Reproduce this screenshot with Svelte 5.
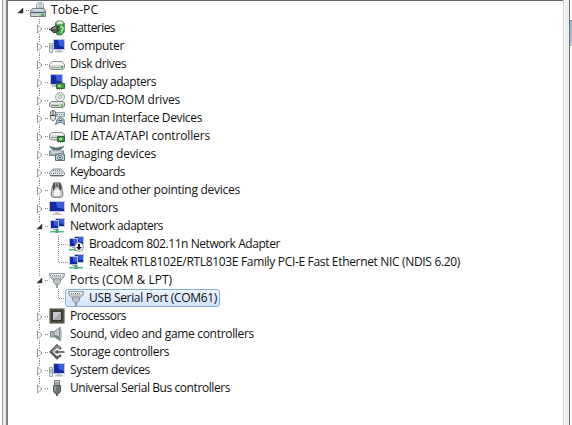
<script>
  const rows = [
    { level: 0, icon: 'pc', text: 'Tobe-PC', open: true, w: 47 },
    { level: 1, icon: 'battery', text: 'Batteries', w: 45 },
    { level: 1, icon: 'computer', text: 'Computer', w: 54 },
    { level: 1, icon: 'disk', text: 'Disk drives', w: 56 },
    { level: 1, icon: 'display', text: 'Display adapters', w: 86 },
    { level: 1, icon: 'dvd', text: 'DVD/CD-ROM drives', w: 110 },
    { level: 1, icon: 'hid', text: 'Human Interface Devices', w: 132 },
    { level: 1, icon: 'ide', text: 'IDE ATA/ATAPI controllers', w: 140 },
    { level: 1, icon: 'imaging', text: 'Imaging devices', w: 86 },
    { level: 1, icon: 'keyboard', text: 'Keyboards', w: 55 },
    { level: 1, icon: 'mouse', text: 'Mice and other pointing devices', w: 170 },
    { level: 1, icon: 'monitor', text: 'Monitors', w: 48 },
    { level: 1, icon: 'network', text: 'Network adapters', w: 93, open: true },
    { level: 2, icon: 'netdown', text: 'Broadcom 802.11n Network Adapter', w: 191 },
    { level: 2, icon: 'network', text: 'Realtek RTL8102E/RTL8103E Family PCI-E Fast Ethernet NIC (NDIS 6.20)', w: 371, end: true },
    { level: 1, icon: 'port', text: 'Ports (COM & LPT)', w: 102, open: true },
    { level: 2, icon: 'port', text: 'USB Serial Port (COM61)', w: 128, end: true, selected: true },
    { level: 1, icon: 'cpu', text: 'Processors', w: 56 },
    { level: 1, icon: 'sound', text: 'Sound, video and game controllers', w: 184 },
    { level: 1, icon: 'storage', text: 'Storage controllers', w: 99 },
    { level: 1, icon: 'computer', text: 'System devices', w: 80 },
    { level: 1, icon: 'usb', text: 'Universal Serial Bus controllers', w: 160, end: true }
  ];

  // Spread the letters so that a label takes its nominal width.
  function fit(node, width) {
    const natural = node.getBoundingClientRect().width;
    node.style.letterSpacing = `${(width - natural) / node.textContent.length}px`;
  }
</script>

{#snippet screen(x, y, w, h)}
  <rect {x} {y} width={w} height={h} fill="#bcc8da" />
  <rect x={x + 1} y={y + 1} width={w - 2} height={h - 2} fill="#142a9e" />
  <path d="M{x + w / 2 - 1} {y + 1}H{x + w - 1}V{y + h - 3}L{x + w / 2} {y + h / 2 + 1}Z" fill="#3c5ce0" />
{/snippet}

{#snippet glyph(name)}
  <svg class="icon" viewBox="0 0 16 16" width="16" height="16">
    {#if name === 'pc'}
      <path d="M6.5 7V2.5L8 .7H12L13.5 2.5V7" fill="#e1e7e9" stroke="#89959a" />
      <path d="M8.5 3H12M8.5 5H12" stroke="#91a6b0" />
      <path d="M2.5 6.5H14L15.5 9V14.5H.5V9Z" fill="#b5c2c8" stroke="#758388" />
      <path d="M1 10.5H15" stroke="#58666c" />
      <path d="M3 8H13" stroke="#e9eff1" />
      <path d="M2 13H9" stroke="#e2e8ea" />
      <rect x="11" y="12" width="3" height="2" fill="#4fae4d" />
    {:else if name === 'battery'}
      <path d="M6.5 3L8 1.2H13L15.2 3V12L12.5 14.8H8Z" fill="#3ba04a" stroke="#2d7b3c" />
      <ellipse cx="10.8" cy="2.8" rx="3.6" ry="1.8" fill="#e3eddf" stroke="#6f9a70" stroke-width=".6" />
      <path d="M11 7Q13.5 6 14 8.5L12 13" fill="none" stroke="#a2e38f" stroke-width="1.8" />
      <path d="M0 9.5H3M7 7L11 6.5M7 11L10.5 10" stroke="#42453c" stroke-width="1.4" />
      <path d="M2.5 8L7 5.8L9 8L8 12L5 12.8L2.5 11Z" fill="#565b50" stroke="#30352d" />
      <path d="M4 8.6L7 7.6" stroke="#c6c8af" />
    {:else if name === 'computer'}
      {@render screen(4, 1, 12, 11)}
      <path d="M8 12H12V13H14V14.5H6V13H8Z" fill="#b6bfca" />
      <path d="M.5 5.5H3.5V14.5H.5Z" fill="#e2e6e8" stroke="#98a2a8" />
      <path d="M1 8H3M1 10H3" stroke="#89949b" />
    {:else if name === 'disk'}
      <path d="M3 5.5H13L15.5 8.5V11.5L14 13.5H2L.5 11.5V8.5Z" fill="#d2d6d4" stroke="#858c88" />
      <path d="M3.2 6H12.8L15 9H1Z" fill="#f7f8f7" />
      <path d="M2 11.5H11" stroke="#a1a8a4" />
      <rect x="12" y="10" width="2" height="2" fill="#42b63f" />
    {:else if name === 'display'}
      {@render screen(1, 0, 13, 11)}
      <path d="M3 11H8V13H3Z" fill="#b2bac5" />
      <path d="M7.5 9.5H15.5V14.5H7.5Z" fill="#469449" stroke="#286e37" />
      <path d="M9 11H12V13H9Z" fill="#a8d69c" />
      <path d="M8 15.5H14" stroke="#b4a64d" stroke-dasharray="1 1" />
    {:else if name === 'dvd'}
      <circle cx="11" cy="5" r="4.5" fill="#e6ebe4" stroke="#a0a8a1" />
      <path d="M11 5L9 1M11 5L14 2" stroke="#add1a4" stroke-width="1.4" />
      <circle cx="11" cy="5" r="1.4" fill="#fff" stroke="#999" stroke-width=".7" />
      <path d="M3 9.5H14L15.5 11V14L14 15.5H2L.5 14V11Z" fill="#cfd4d0" stroke="#7d8580" />
      <path d="M2 11H13" stroke="#f6f7f6" />
      <path d="M2 13.5H10" stroke="#78807b" />
      <rect x="12" y="12.5" width="2" height="2" fill="#42aa3f" />
    {:else if name === 'hid'}
      <path d="M1.5 2L3 .5H5L6.5 2V9L5 10.5H3L1.5 9Z" fill="#dcdfe0" stroke="#6d7579" />
      <path d="M4 1V5M2 5.5H6" stroke="#42494c" />
      <path d="M7.5 2.5H15.5V6.5H7.5Z" fill="#dfe5e9" stroke="#94a1aa" />
      <path d="M8 4.5H15" stroke="#76858f" stroke-dasharray="1 1" />
      <path d="M6.5 14.5L8 9.5L10 7.8H13L15 9.5L15.5 15L13 12.5H10Z" fill="#b0c0cb" stroke="#657785" />
      <path d="M9.5 10.5H13" stroke="#42586a" />
    {:else if name === 'ide'}
      <path d="M3 4.5H13L15.5 6.5V10.5L14 12H2L.5 10.5V6.5Z" fill="#d8dcda" stroke="#858b88" />
      <path d="M3 5H13L14.5 7H1.5Z" fill="#f8f8f8" />
      <path d="M2 9.5H8" stroke="#969f9a" />
      <path d="M8.5 8.5H15.5V13.5H8.5Z" fill="#429245" stroke="#246a35" />
      <path d="M10 10H13V12H10Z" fill="#aadd9b" />
      <path d="M9 14.5H15" stroke="#b4a64d" stroke-dasharray="1 1" />
    {:else if name === 'imaging'}
      <path d="M.5 .5L7 2L15 .5L11 4H4Z" fill="#5c7679" stroke="#455b60" stroke-width=".6" />
      <path d="M.5 5H14.5V8.5L12 9.5H.5Z" fill="#abbbbd" stroke="#71868a" />
      <path d="M2 6H12" stroke="#eef4f4" />
      <path d="M6.5 8.5H9L10 7.5H13L14 8.5H15.5V14.5H6.5Z" fill="#bccad3" stroke="#5d717e" />
      <circle cx="11" cy="11.5" r="2.3" fill="#edf4f8" stroke="#5a7486" />
      <circle cx="11" cy="11.5" r=".9" fill="#263d4e" />
    {:else if name === 'keyboard'}
      <path d="M4 5H12L15.5 9V10.5L14 12H2L.5 10.5V9Z" fill="#e1e3e5" stroke="#85898d" />
      <path d="M4 6.5H12M2 9.5H14" stroke="#81888d" stroke-dasharray="1 1" />
      <path d="M3 8H13" stroke="#9ca2a6" stroke-dasharray="1 1" stroke-dashoffset="1" />
      <path d="M1.5 11.5H14.5" stroke="#64696d" />
    {:else if name === 'mouse'}
      <path d="M5 .8H11L12.5 4L14 12Q14 15.4 11 15.4H5Q2 15.4 2 12L3.5 4Z" fill="#c6c8c8" stroke="#767a7a" />
      <path d="M4.5 1L6 1L6.5 5L4.5 9L3.6 6ZM11.5 1L10 1L9.5 5L11.5 9L12.4 6Z" fill="#454949" />
      <path d="M8 7Q11 8 11.5 13Q8 15 4.5 13Q5 8 8 7Z" fill="#f6f6f6" />
      <path d="M8 1.5V5" stroke="#424646" stroke-width="1.4" />
    {:else if name === 'monitor'}
      {@render screen(0, 1, 16, 11)}
      <path d="M6 12H10V13.5H13V15H3V13.5H6Z" fill="#cfc0cb" />
    {:else if name === 'network' || name === 'netdown'}
      {@render screen(6, 0, 10, 9)}
      {@render screen(1, 2, 9, 9)}
      <path d="M4 11H8V12H4Z" fill="#a2afbb" />
      <path d="M1 13.7H15" stroke="#58bd84" stroke-width="1.6" />
      <path d="M8 11V15" stroke="#46a874" stroke-width="3" />
      {#if name === 'netdown'}
        <circle cx="11" cy="11" r="4.3" fill="#fafafa" stroke="#9a9a9a" />
        <path d="M10 8H12V11H14L11 14L8 11H10Z" fill="#191919" />
      {/if}
    {:else if name === 'port'}
      <path d="M.5 1.5H15.5L15 5L12.5 7.5H3.5L1 5Z" fill="#c5cbce" stroke="#8f989d" />
      <path d="M2 2H14V4H2Z" fill="#eff1f2" />
      <path d="M3 3.5H13" stroke="#717b80" stroke-dasharray="1 1" />
      <path d="M4.5 7H11.5V10L10 12H6L4.5 10Z" fill="#d4d8da" stroke="#899297" />
      <path d="M6 7V10M8 7V11M10 7V10" stroke="#a0a9ad" />
      <path d="M6.5 12H9.5V13.5H9V16H7V13.5H6.5Z" fill="#929ca1" />
    {:else if name === 'cpu'}
      <rect x=".5" y=".5" width="15" height="15" fill="#44443f" />
      <rect x="1" y="1" width="14" height="14" fill="none" stroke="#8e8c77" stroke-dasharray="1 1" />
      <rect x="3.5" y="3.5" width="9" height="9" fill="#a3a5a6" stroke="#383838" />
      <path d="M4 4H12L4 12Z" fill="#c6c8c9" />
    {:else if name === 'sound'}
      <path d="M1.5 5.5H5V11H1.5Z" fill="#a5b0b5" stroke="#818c91" />
      <path d="M5 5.3L11.5 .5V15.5L5 11Z" fill="#7c888e" />
      <path d="M5.5 6L10 2.5V10L5.5 9Z" fill="#c1cace" />
      <path d="M11.5 1Q13.3 8 11.5 15" fill="#dbe1e3" stroke="#9ba6ac" />
    {:else if name === 'storage'}
      <path d="M12 5L8 1.8L2 8L8 14L12 11" fill="none" stroke="#5d5f5d" stroke-width="2.8" />
      <path d="M11 4.5L8 2.3L3 7.5" fill="none" stroke="#adb0ad" />
      <path d="M6 8H15.5" stroke="#666966" stroke-width="1.8" />
      <path d="M5.5 8L9 5.8V10.2Z" fill="#555755" />
    {:else if name === 'usb'}
      <path d="M5.5 .5H10.5V5H5.5Z" fill="#d9dcde" stroke="#74797c" />
      <path d="M7 2V4M9 2V4" stroke="#606568" />
      <path d="M4.5 5.5H11.5V11L10 13.5H6L4.5 11Z" fill="#707578" stroke="#505558" />
      <path d="M6 6V11" stroke="#b5babd" />
      <path d="M8 13V16" stroke="#5d6265" stroke-width="2" />
    {/if}
  </svg>
{/snippet}

<div class="window">
  <div class="edge left"></div>
  <div class="tree">
    {#each rows as row}
      <div class="row">
        {#if row.level > 0}<span class="cell"></span>{/if}
        {#if row.level === 2}
          <svg class="cell" width="19" height="18"><path class="dots" d="M9.5 0V18" /></svg>
        {/if}
        <svg class="cell" width="19" height="18">
          {#if row.level === 2}
            <path class="dots" d="M9.5 0V{row.end ? 9 : 18}" />
          {:else if row.level === 1}
            <path class="dots" d="M9.5 0V5{row.end ? '' : 'M9.5 15V18'}" />
          {/if}
          <path class="dots" d="M{row.level === 2 ? 10 : 15} 9.5H19" />
          {#if row.open}
            <path d="M12 7V12H7Z" fill="#333" stroke="#333" stroke-width=".5" />
          {:else if row.level === 1}
            <path d="M7.5 6L12 10L7.5 14Z" fill="#fff" stroke="#999" />
          {/if}
        </svg>
        <span class="item" class:selected={row.selected}>
          {@render glyph(row.icon)}
          <span class="label" use:fit={row.w}>{row.text}</span>
        </span>
      </div>
    {/each}
  </div>
  <div class="edge right"></div>
  <div class="beyond"><i></i></div>
</div>

<style>
  :global(body) {
    margin: 0;
    background: #fff;
  }
  .window {
    display: flex;
    width: 572px;
    height: 425px;
    overflow: hidden;
    font: 12px/18px 'Open Sans', 'Noto Sans', sans-serif;
    color: #111;
  }
  .edge {
    box-sizing: border-box;
    flex: none;
    background: #eee;
  }
  .left {
    width: 6px;
    margin-left: 2px;
    border-left: 1px solid #999;
    border-right: 2px solid #808080;
  }
  .tree {
    box-sizing: border-box;
    flex: none;
    width: 555px;
    padding-left: 3px;
    border-top: 1px solid #666;
  }
  .right {
    width: 7px;
    border-left: 1px solid #ccc;
    border-right: 1px solid #707070;
    box-shadow: inset 1px 0 #fff;
  }
  .beyond {
    flex: 1;
    padding-top: 20px;
    background: #fff;
  }
  .beyond i {
    display: block;
    height: 25px;
    border-top: 1px solid #6e7688;
    background: linear-gradient(#9dadcd, #b4bfd9);
  }
  .row {
    display: flex;
    height: 18px;
  }
  .cell {
    flex: none;
    width: 19px;
    height: 18px;
  }
  .dots {
    fill: none;
    stroke: #8c8c8c;
    stroke-dasharray: 1 1;
  }
  .item {
    display: flex;
    align-items: center;
    box-sizing: border-box;
    height: 18px;
  }
  .icon {
    flex: none;
    margin-right: 5px;
  }
  .label {
    white-space: pre;
  }
  .selected {
    margin-left: -3px;
    padding: 0 2px;
    border: 1px solid #84acdd;
    border-radius: 3px;
    background: linear-gradient(#edf5fe, #cfe3fb);
  }
</style>
